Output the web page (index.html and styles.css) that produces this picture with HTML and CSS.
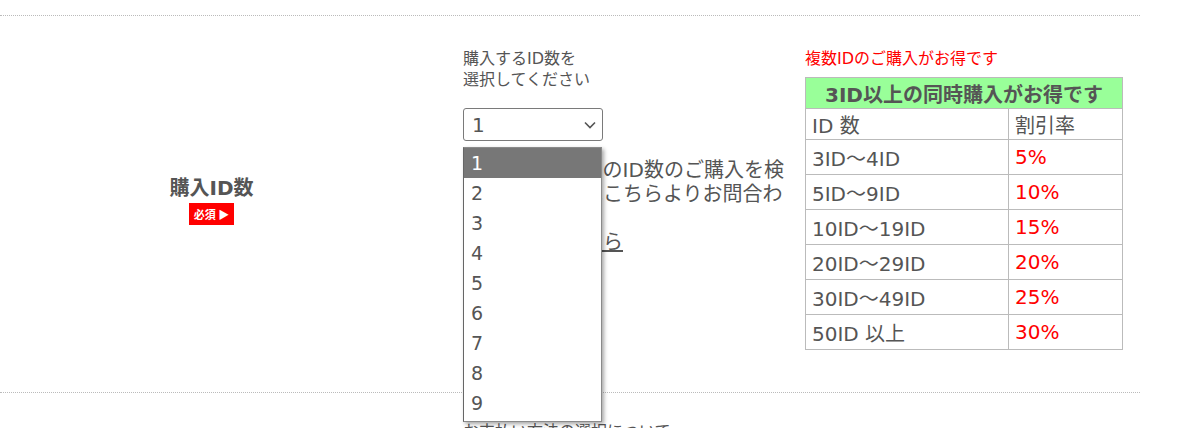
FILE: index.html
```html
<!DOCTYPE html>
<html lang="ja">
<head>
<meta charset="utf-8">
<title>購入ID数</title>
<link rel="stylesheet" href="styles.css">
</head>
<body>
<div class="form">
  <div class="row">
    <div class="label-col">
      <div class="label">購入ID数</div>
      <span class="badge">必須 ▶</span>
    </div>
    <div class="input-col">
      <p class="hint">購入するID数を<br>選択してください</p>
      <div class="select-wrap">
        <div class="select">
          <span>1</span>
          <svg class="chev" width="12" height="8" viewBox="0 0 12 8"><polyline points="1,1.5 6,6.5 11,1.5" fill="none" stroke="#555" stroke-width="1.6"/></svg>
        </div>
        <ul class="listbox">
          <li class="opt active">1</li>
          <li class="opt">2</li>
          <li class="opt">3</li>
          <li class="opt">4</li>
          <li class="opt">5</li>
          <li class="opt">6</li>
          <li class="opt">7</li>
          <li class="opt">8</li>
          <li class="opt">9</li>
        </ul>
      </div>
      <p class="note">表記よりも多くのID数のご購入を検討中のお客様はこちらよりお問合わせください。<br><a class="link" href="#">お問合せはこちら</a></p>
    </div>
    <div class="table-col">
      <p class="promo">複数IDのご購入がお得です</p>
      <table class="rates">
        <tr class="head"><th colspan="2">3ID以上の同時購入がお得です</th></tr>
        <tr class="sub"><td class="c1">ID 数</td><td class="c2">割引率</td></tr>
        <tr><td class="c1">3ID～4ID</td><td class="c2 red">5%</td></tr>
        <tr><td class="c1">5ID～9ID</td><td class="c2 red">10%</td></tr>
        <tr><td class="c1">10ID～19ID</td><td class="c2 red">15%</td></tr>
        <tr><td class="c1">20ID～29ID</td><td class="c2 red">20%</td></tr>
        <tr><td class="c1">30ID～49ID</td><td class="c2 red">25%</td></tr>
        <tr><td class="c1">50ID 以上</td><td class="c2 red">30%</td></tr>
      </table>
    </div>
  </div>
  <div class="row row-next">
    <div class="label-col"></div>
    <div class="input-col">
      <p class="hint">お支払い方法の選択について</p>
    </div>
  </div>
</div>
</body>
</html>
```

FILE: styles.css
```css
* { box-sizing: border-box; }
html, body { margin: 0; padding: 0; background: #fff; }
body {
  font-family: "DejaVu Sans", "Noto Sans CJK JP", sans-serif;
  color: #555;
  padding-top: 15px;
  overflow: hidden;
}
.form { width: 1140px; }
.row {
  display: flex;
  border-top: 1px dotted #bbb;
  height: 377px;
}
.row-next { height: auto; }
.label-col {
  width: 423px;
  flex: none;
  display: flex;
  flex-direction: column;
  align-items: center;
  justify-content: center;
  padding-bottom: 8px;
}
.label {
  font-size: 20px;
  font-weight: bold;
  line-height: 26px;
  color: #555;
}
.badge {
  margin-top: 2px;
  width: 45px;
  height: 22px;
  background: #f00;
  color: #fff;
  font-size: 11px;
  font-weight: bold;
  line-height: 22px;
  text-align: center;
  font-family: "Noto Sans CJK JP", sans-serif;
}
.input-col {
  width: 330px;
  flex: none;
  margin-left: 40px;
  padding-top: 32px;
}
.row-next .input-col { padding-top: 28px; }
.hint {
  margin: 0;
  font-size: 16px;
  line-height: 21px;
}
.select-wrap {
  position: relative;
  width: 140px;
  margin-top: 18px;
}
.select {
  height: 33px;
  border: 1px solid #7a7a7a;
  border-radius: 3px;
  display: flex;
  align-items: center;
  justify-content: space-between;
  padding: 0 6px 0 8px;
  font-size: 20px;
  background: #fff;
}
.listbox {
  position: absolute;
  top: 39px;
  left: 0;
  width: 139px;
  margin: 0;
  padding: 0 0 3px;
  list-style: none;
  background: #fff;
  border: 1px solid #8a8a8a;
  border-left-color: #666;
  box-shadow: 2px 2px 4px rgba(0, 0, 0, 0.35);
  z-index: 2;
}
.opt {
  height: 30px;
  line-height: 31px;
  padding-left: 7px;
  font-size: 19px;
  color: #555;
}
.opt.active { background: #777; color: #fff; }
.note {
  margin: 17px 0 0;
  font-size: 20px;
  line-height: 24px;
}
.link { color: #555; text-decoration: underline; }
.table-col {
  width: 318px;
  flex: none;
  margin-left: 12px;
  padding-top: 32px;
}
.promo {
  margin: 0;
  font-size: 16px;
  line-height: 21px;
  color: #f00;
}
.rates {
  margin-top: 8px;
  width: 318px;
  border-collapse: collapse;
  font-size: 20px;
}
.rates th, .rates td {
  border: 1px solid #bbb;
  padding: 0 6px;
  text-align: left;
  font-weight: normal;
}
.rates tr { height: 35px; }
.rates tr.head, .rates tr.sub { height: 31px; }
.rates th {
  background: #9f9;
  font-weight: bold;
  text-align: center;
  color: #555;
}
.c1 { width: 203px; }
.red { color: #f00; }
```
